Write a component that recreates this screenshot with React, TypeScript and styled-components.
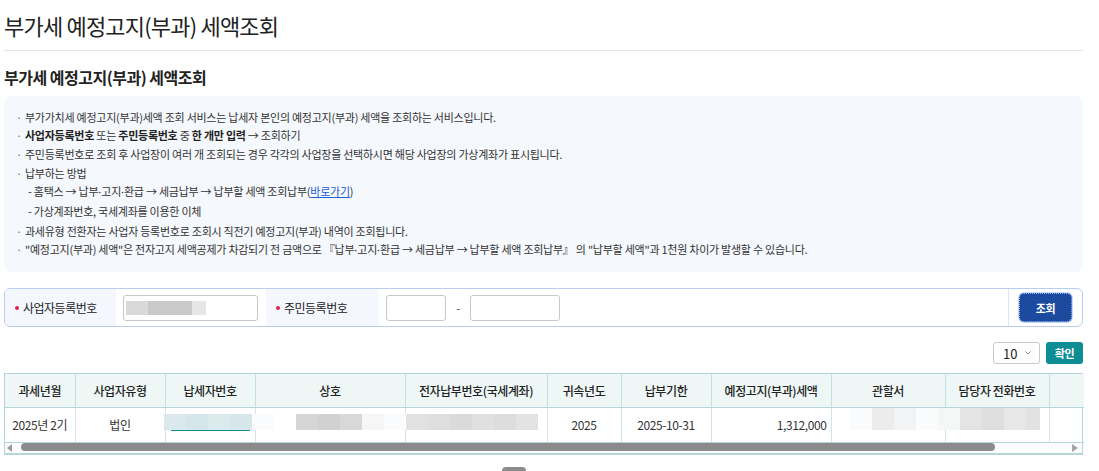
import styled, { createGlobalStyle } from "styled-components";

const GlobalStyle = createGlobalStyle`
  html, body {
    margin: 0;
    padding: 0;
    overflow: hidden;
    background: #fff;
  }
  body {
    font-family: "Noto Sans CJK KR", "Noto Sans", sans-serif;
    color: #333;
  }
  * {
    box-sizing: border-box;
  }
`;

const Page = styled.div`
  width: 1099px;
  padding: 0 16px 0 4px;
`;

const PageTitle = styled.h1`
  margin: 0;
  height: 51px;
  line-height: 50px;
  font-size: 22px;
  font-weight: 400;
  letter-spacing: -0.8px;
  color: #222;
  border-bottom: 1px solid #e4e4e4;
`;

const SectionTitle = styled.h2`
  margin: 14px 0 7px;
  height: 24px;
  line-height: 24px;
  font-size: 16px;
  font-weight: 700;
  letter-spacing: -0.5px;
  color: #222;
`;

const InfoBox = styled.ul`
  margin: 0;
  list-style: none;
  background: #f5f8fd;
  border-radius: 8px;
  padding: 11.5px 12px 13.5px 21px;
  height: 176px;
  font-size: 11px;
  letter-spacing: -0.25px;
  line-height: 18.7px;
  color: #333;
`;

const InfoItem = styled.li<{ $gap?: boolean }>`
  position: relative;
  margin-top: ${(p) => (p.$gap ? "1px" : "0")};

  &::before {
    content: "·";
    position: absolute;
    left: -9px;
    color: #777;
  }
`;

const SubList = styled.ul`
  margin: 0;
  padding: 0 0 0 3px;
  list-style: none;
`;

const SubItem = styled.li``;

const Strong = styled.b`
  font-weight: 700;
  color: #222;
`;

const Middot = styled.span`
  font-family: "Noto Sans", sans-serif;
  letter-spacing: 0;
`;

const Link = styled.a`
  color: #1a5fd6;
  text-decoration: underline;
`;

const SearchBox = styled.div`
  margin-top: 16px;
  height: 39px;
  display: flex;
  border: 1px solid #b9cdf0;
  border-radius: 6px;
  overflow: hidden;
  font-size: 12px;
  letter-spacing: -0.5px;
  color: #222;
`;

const LabelCell = styled.div<{ $w: number }>`
  width: ${(p) => p.$w}px;
  flex: none;
  display: flex;
  align-items: center;
  padding-left: 9px;
  background: #f4f7fd;
`;

const Required = styled.span`
  width: 4px;
  height: 4px;
  border-radius: 50%;
  background: #e0224f;
  margin: 0 4px 0 1px;
`;

const FieldCell = styled.div<{ $w?: number }>`
  ${(p) => (p.$w ? `width: ${p.$w}px; flex: none;` : "flex: 1;")}
  display: flex;
  align-items: center;
  padding-left: 7px;
`;

const TextInput = styled.div<{ $w: number }>`
  width: ${(p) => p.$w}px;
  height: 26px;
  border: 1px solid #c8c8c8;
  border-radius: 3px;
  background: #fff;
  display: flex;
  align-items: center;
  padding-left: 2px;
`;

const Dash = styled.span`
  width: 24px;
  text-align: center;
  color: #555;
`;

const ButtonCell = styled.div`
  width: 74px;
  flex: none;
  border-left: 1px solid #dde6f3;
  display: flex;
  align-items: center;
  padding-left: 10px;
`;

const SearchButton = styled.button`
  width: 53px;
  height: 29px;
  border: 1px dotted #9dbcf5;
  border-radius: 5px;
  background: #1b4a9f;
  box-shadow: 0 0 0 1px #c6d8f7;
  color: #fff;
  font-family: inherit;
  font-size: 11px;
  font-weight: 700;
  letter-spacing: -0.3px;
  cursor: pointer;
`;

const Mosaic = styled.div<{ $h: number }>`
  display: flex;
  height: ${(p) => p.$h}px;
`;

const Tile = styled.div<{ $c: string; $w?: number }>`
  width: ${(p) => p.$w ?? 22}px;
  height: 100%;
  background: ${(p) => p.$c};
`;

const Toolbar = styled.div`
  margin-top: 15px;
  height: 22px;
  display: flex;
  justify-content: flex-end;
  gap: 6px;
`;

const PageSize = styled.div`
  width: 47px;
  height: 22px;
  border: 1px solid #c9c9c9;
  border-radius: 3px;
  display: flex;
  align-items: center;
  justify-content: space-between;
  padding: 0 7px 0 9px;
  font-size: 13px;
  color: #222;
`;

const ConfirmButton = styled.button`
  width: 37px;
  height: 22px;
  border: none;
  border-radius: 3px;
  background: #0f8d95;
  color: #fff;
  font-family: inherit;
  font-size: 11px;
  font-weight: 700;
  padding: 0;
  letter-spacing: -0.3px;
`;

const TableWrap = styled.div`
  margin-top: 9px;
  width: 1079px;
  border: 1px solid #b4d6da;
  border-bottom-width: 2px;
`;

const Table = styled.table`
  width: 100%;
  border-collapse: collapse;
  table-layout: fixed;
  font-size: 12px;
  letter-spacing: -0.4px;
`;

const Th = styled.th`
  height: 33px;
  background: #eef7f6;
  border-right: 1px solid #c2dfe1;
  border-bottom: 1px solid #b4d6da;
  font-weight: 500;
  color: #222;
  padding: 0;
  &:last-child {
    border-right: none;
  }
`;

const Td = styled.td<{ $align?: string }>`
  position: relative;
  height: 35px;
  border-right: 1px solid #cfe5e7;
  border-bottom: 1px solid #b4d6da;
  text-align: ${(p) => p.$align ?? "center"};
  padding: ${(p) => (p.$align === "right" ? "0 4px 0 0" : "0")};
  color: #333;
  &:last-child {
    border-right: none;
  }
`;

const Cover = styled.div<{ $left: number; $top: number }>`
  position: absolute;
  left: ${(p) => p.$left}px;
  top: ${(p) => p.$top}px;
  z-index: 1;
`;

const Underline = styled.div`
  margin-left: 7px;
  width: 79px;
  height: 1px;
  background: #0f8d95;
`;

const ScrollTrack = styled.div`
  height: 10px;
  background: #fcfcfc;
  display: flex;
  align-items: flex-start;
  padding: 0 4px 0 2px;
`;

const Arrow = styled.span<{ $dir: "left" | "right" }>`
  width: 0;
  height: 0;
  margin-top: 1px;
  border-top: 4px solid transparent;
  border-bottom: 4px solid transparent;
  ${(p) =>
    p.$dir === "left"
      ? "border-right: 5px solid #9a9a9a;"
      : "border-left: 6px solid #a5a5a5;"}
`;

const Thumb = styled.div`
  margin-left: 9px;
  width: 974px;
  height: 8px;
  border-radius: 4px;
  background: #8b8b8b;
`;

const ThumbRest = styled.div`
  flex: 1;
`;

const Pager = styled.div`
  margin: 12px 0 0 498px;
  display: flex;
`;

const PageBtn = styled.div`
  width: 24px;
  height: 20px;
  border-radius: 4px;
  background: #8c8c8c;
`;

const columns = [
  { title: "과세년월", w: 70 },
  { title: "사업자유형", w: 90 },
  { title: "납세자번호", w: 90 },
  { title: "상호", w: 150 },
  { title: "전자납부번호(국세계좌)", w: 142 },
  { title: "귀속년도", w: 74 },
  { title: "납부기한", w: 90 },
  { title: "예정고지(부과)세액", w: 120 },
  { title: "관할서", w: 114 },
  { title: "담당자 전화번호", w: 104 },
  { title: "", w: 35 },
];

const taxIdTiles = ["#dbe9ec", "#d5e6ea", "#daeaed", "#d6e7eb", "#f9fbfd"];
const nameTiles = ["#d6d6d6", "#d1d1d1", "#d8d8d8", "#f6f6f6", "#fafbfd"];
const accountTiles = ["#e2e1e0", "#dedede", "#dadada", "#e0e0e0", "#dddddd", "#e3e3e3"];
const officeTiles = [
  "#fafbfc",
  "#ececec",
  "#f2f3f4",
  "#fafbfc",
  "#f5f6f6",
  "#e4e4e4",
  "#dedede",
  "#e7e7e7",
];

const PayPath = () => (
  <>
    납부<Middot>·</Middot>고지<Middot>·</Middot>환급
  </>
);

const App = () => {
  return (
    <>
      <GlobalStyle />
      <Page>
        <PageTitle>부가세 예정고지(부과) 세액조회</PageTitle>
        <SectionTitle>부가세 예정고지(부과) 세액조회</SectionTitle>

        <InfoBox>
          <InfoItem>
            부가가치세 예정고지(부과)세액 조회 서비스는 납세자 본인의 예정고지(부과) 세액을 조회하는
            서비스입니다.
          </InfoItem>
          <InfoItem>
            <Strong>사업자등록번호</Strong> 또는 <Strong>주민등록번호</Strong> 중{" "}
            <Strong>한 개만 입력</Strong> → 조회하기
          </InfoItem>
          <InfoItem>
            주민등록번호로 조회 후 사업장이 여러 개 조회되는 경우 각각의 사업장을 선택하시면 해당
            사업장의 가상계좌가 표시됩니다.
          </InfoItem>
          <InfoItem>
            납부하는 방법
            <SubList>
              <SubItem>
                - 홈택스 → <PayPath /> → 세금납부 → 납부할 세액 조회납부(
                <Link href="#">바로가기</Link>)
              </SubItem>
              <SubItem>- 가상계좌번호, 국세계좌를 이용한 이체</SubItem>
            </SubList>
          </InfoItem>
          <InfoItem $gap>
            과세유형 전환자는 사업자 등록번호로 조회시 직전기 예정고지(부과) 내역이 조회됩니다.
          </InfoItem>
          <InfoItem>
            "예정고지(부과) 세액"은 전자고지 세액공제가 차감되기 전 금액으로 『<PayPath /> → 세금납부
            → 납부할 세액 조회납부』 의 "납부할 세액"과 1천원 차이가 발생할 수 있습니다.
          </InfoItem>
        </InfoBox>

        <SearchBox>
          <LabelCell $w={111}>
            <Required />
            사업자등록번호
          </LabelCell>
          <FieldCell $w={150}>
            <TextInput $w={135}>
              <Mosaic $h={14}>
                <Tile $c="#d9d9d9" />
                <Tile $c="#c9c9c9" $w={44} />
                <Tile $c="#e6e6e6" $w={14} />
              </Mosaic>
            </TextInput>
          </FieldCell>
          <LabelCell $w={113}>
            <Required />
            주민등록번호
          </LabelCell>
          <FieldCell>
            <TextInput $w={60} />
            <Dash>-</Dash>
            <TextInput $w={90} />
          </FieldCell>
          <ButtonCell>
            <SearchButton type="button">조회</SearchButton>
          </ButtonCell>
        </SearchBox>

        <Toolbar>
          <PageSize>
            10
            <svg width="8" height="6" viewBox="0 0 8 6">
              <path d="M1.5 1.5 L4 4 L6.5 1.5" fill="none" stroke="#888" strokeWidth="1" />
            </svg>
          </PageSize>
          <ConfirmButton type="button">확인</ConfirmButton>
        </Toolbar>

        <TableWrap>
          <Table>
            <colgroup>
              {columns.map((c, i) => (
                <col key={i} style={{ width: c.w }} />
              ))}
            </colgroup>
            <thead>
              <tr>
                {columns.map((c, i) => (
                  <Th key={i}>{c.title}</Th>
                ))}
              </tr>
            </thead>
            <tbody>
              <tr>
                <Td>2025년 2기</Td>
                <Td>법인</Td>
                <Td>
                  <Cover $left={-2} $top={6}>
                    <Mosaic $h={16}>
                      {taxIdTiles.map((c, i) => (
                        <Tile key={i} $c={c} />
                      ))}
                    </Mosaic>
                    <Underline />
                  </Cover>
                </Td>
                <Td>
                  <Cover $left={40} $top={6}>
                    <Mosaic $h={16}>
                      {nameTiles.map((c, i) => (
                        <Tile key={i} $c={c} />
                      ))}
                    </Mosaic>
                  </Cover>
                </Td>
                <Td>
                  <Cover $left={0} $top={6}>
                    <Mosaic $h={16}>
                      {accountTiles.map((c, i) => (
                        <Tile key={i} $c={c} />
                      ))}
                    </Mosaic>
                  </Cover>
                </Td>
                <Td>2025</Td>
                <Td>2025-10-31</Td>
                <Td $align="right">1,312,000</Td>
                <Td>
                  <Cover $left={18} $top={0}>
                    <Mosaic $h={22}>
                      {officeTiles.map((c, i) => (
                        <Tile key={i} $c={c} />
                      ))}
                      <Tile $c="#e2e2e2" $w={14} />
                    </Mosaic>
                  </Cover>
                </Td>
                <Td />
                <Td />
              </tr>
            </tbody>
          </Table>
          <ScrollTrack>
            <Arrow $dir="left" />
            <Thumb />
            <ThumbRest />
            <Arrow $dir="right" />
          </ScrollTrack>
        </TableWrap>

        <Pager>
          <PageBtn />
        </Pager>
      </Page>
    </>
  );
};

export default App;
